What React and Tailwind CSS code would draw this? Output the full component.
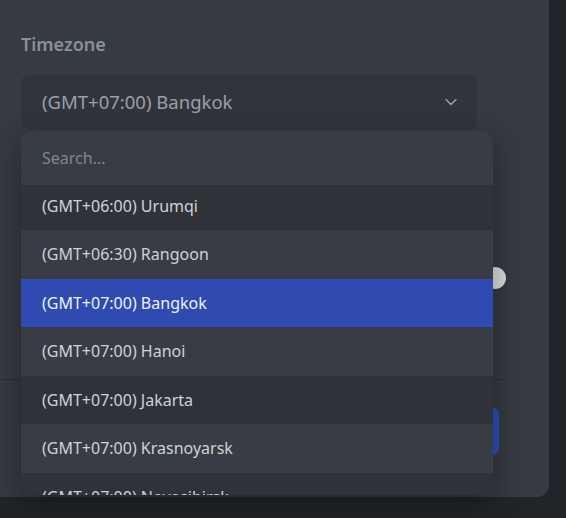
import React from 'react';
import { ChevronDown } from 'lucide-react';

const zones = [
  '(GMT+06:00) Urumqi',
  '(GMT+06:30) Rangoon',
  '(GMT+07:00) Bangkok',
  '(GMT+07:00) Hanoi',
  '(GMT+07:00) Jakarta',
  '(GMT+07:00) Krasnoyarsk',
  '(GMT+07:00) Novosibirsk',
];

const selected = '(GMT+07:00) Bangkok';

export default function App() {
  return (
    <div className="w-[566px] h-[518px] bg-[#212429] overflow-hidden font-['Noto_Sans',sans-serif]">
      <div className="relative w-[549px] h-[497px] bg-[#363a41] rounded-br-xl flex flex-col">
        {/* Settings form behind the open dropdown */}
        <div className="px-[21px] pt-[31px]">
          <div className="text-[18px] leading-[27px] font-semibold text-[#89909b]">Timezone</div>
          <div className="mt-[17px] w-[456px] h-[54px] rounded-lg bg-[#31353b] flex items-center justify-between pl-[21px] pr-[16px]">
            <span className="text-[18.5px] text-[#9aa0a8]">{selected}</span>
            <ChevronDown className="w-5 h-5 text-[#9aa0a8]" strokeWidth={1.75} />
          </div>
          <div className="mt-[137px] flex items-center justify-between w-[485px]">
            <span className="text-[16px] text-[#c9cdd3]">Use 24-hour clock</span>
            <div className="w-[44px] h-[22px] rounded-full bg-[#30343a] flex justify-end">
              <div className="w-[22px] h-[22px] rounded-full bg-[#d9d9d9]" />
            </div>
          </div>
        </div>

        <div className="mt-[89px] w-[505px] border-t border-[#2c2f34]" />

        <div className="mt-[27px] w-[499px] flex justify-end gap-3">
          <button className="h-[49px] px-6 rounded-lg text-[16px] text-[#c9cdd3] bg-[#31353b]">Cancel</button>
          <button className="h-[49px] px-8 rounded-lg text-[16px] font-semibold text-white bg-[#2f4bb1]">Save</button>
        </div>

        {/* Open dropdown */}
        <div className="absolute left-[21px] top-[131px] w-[472px] h-[364px] rounded-xl bg-[#383c44] overflow-hidden flex flex-col shadow-[0_10px_30px_rgba(0,0,0,0.35)]">
          <div className="h-[54px] shrink-0 flex items-center px-[21px] text-[16px] text-[#80868f]">Search...</div>
          <div className="flex-1 overflow-hidden">
            <div className="-mt-[3.5px]">
              {zones.map((z, i) => {
                const active = z === selected;
                const bg = active ? 'bg-[#2f4bb1] text-[#eef1f8]' : i % 2 === 0 ? 'bg-[#2f3238] text-[#cfd2d7]' : 'bg-[#383c44] text-[#cfd2d7]';
                return (
                  <div key={z} className={`h-[48.5px] flex items-center px-[21px] text-[16px] ${bg}`}>
                    {z}
                  </div>
                );
              })}
            </div>
          </div>
        </div>
      </div>
    </div>
  );
}
